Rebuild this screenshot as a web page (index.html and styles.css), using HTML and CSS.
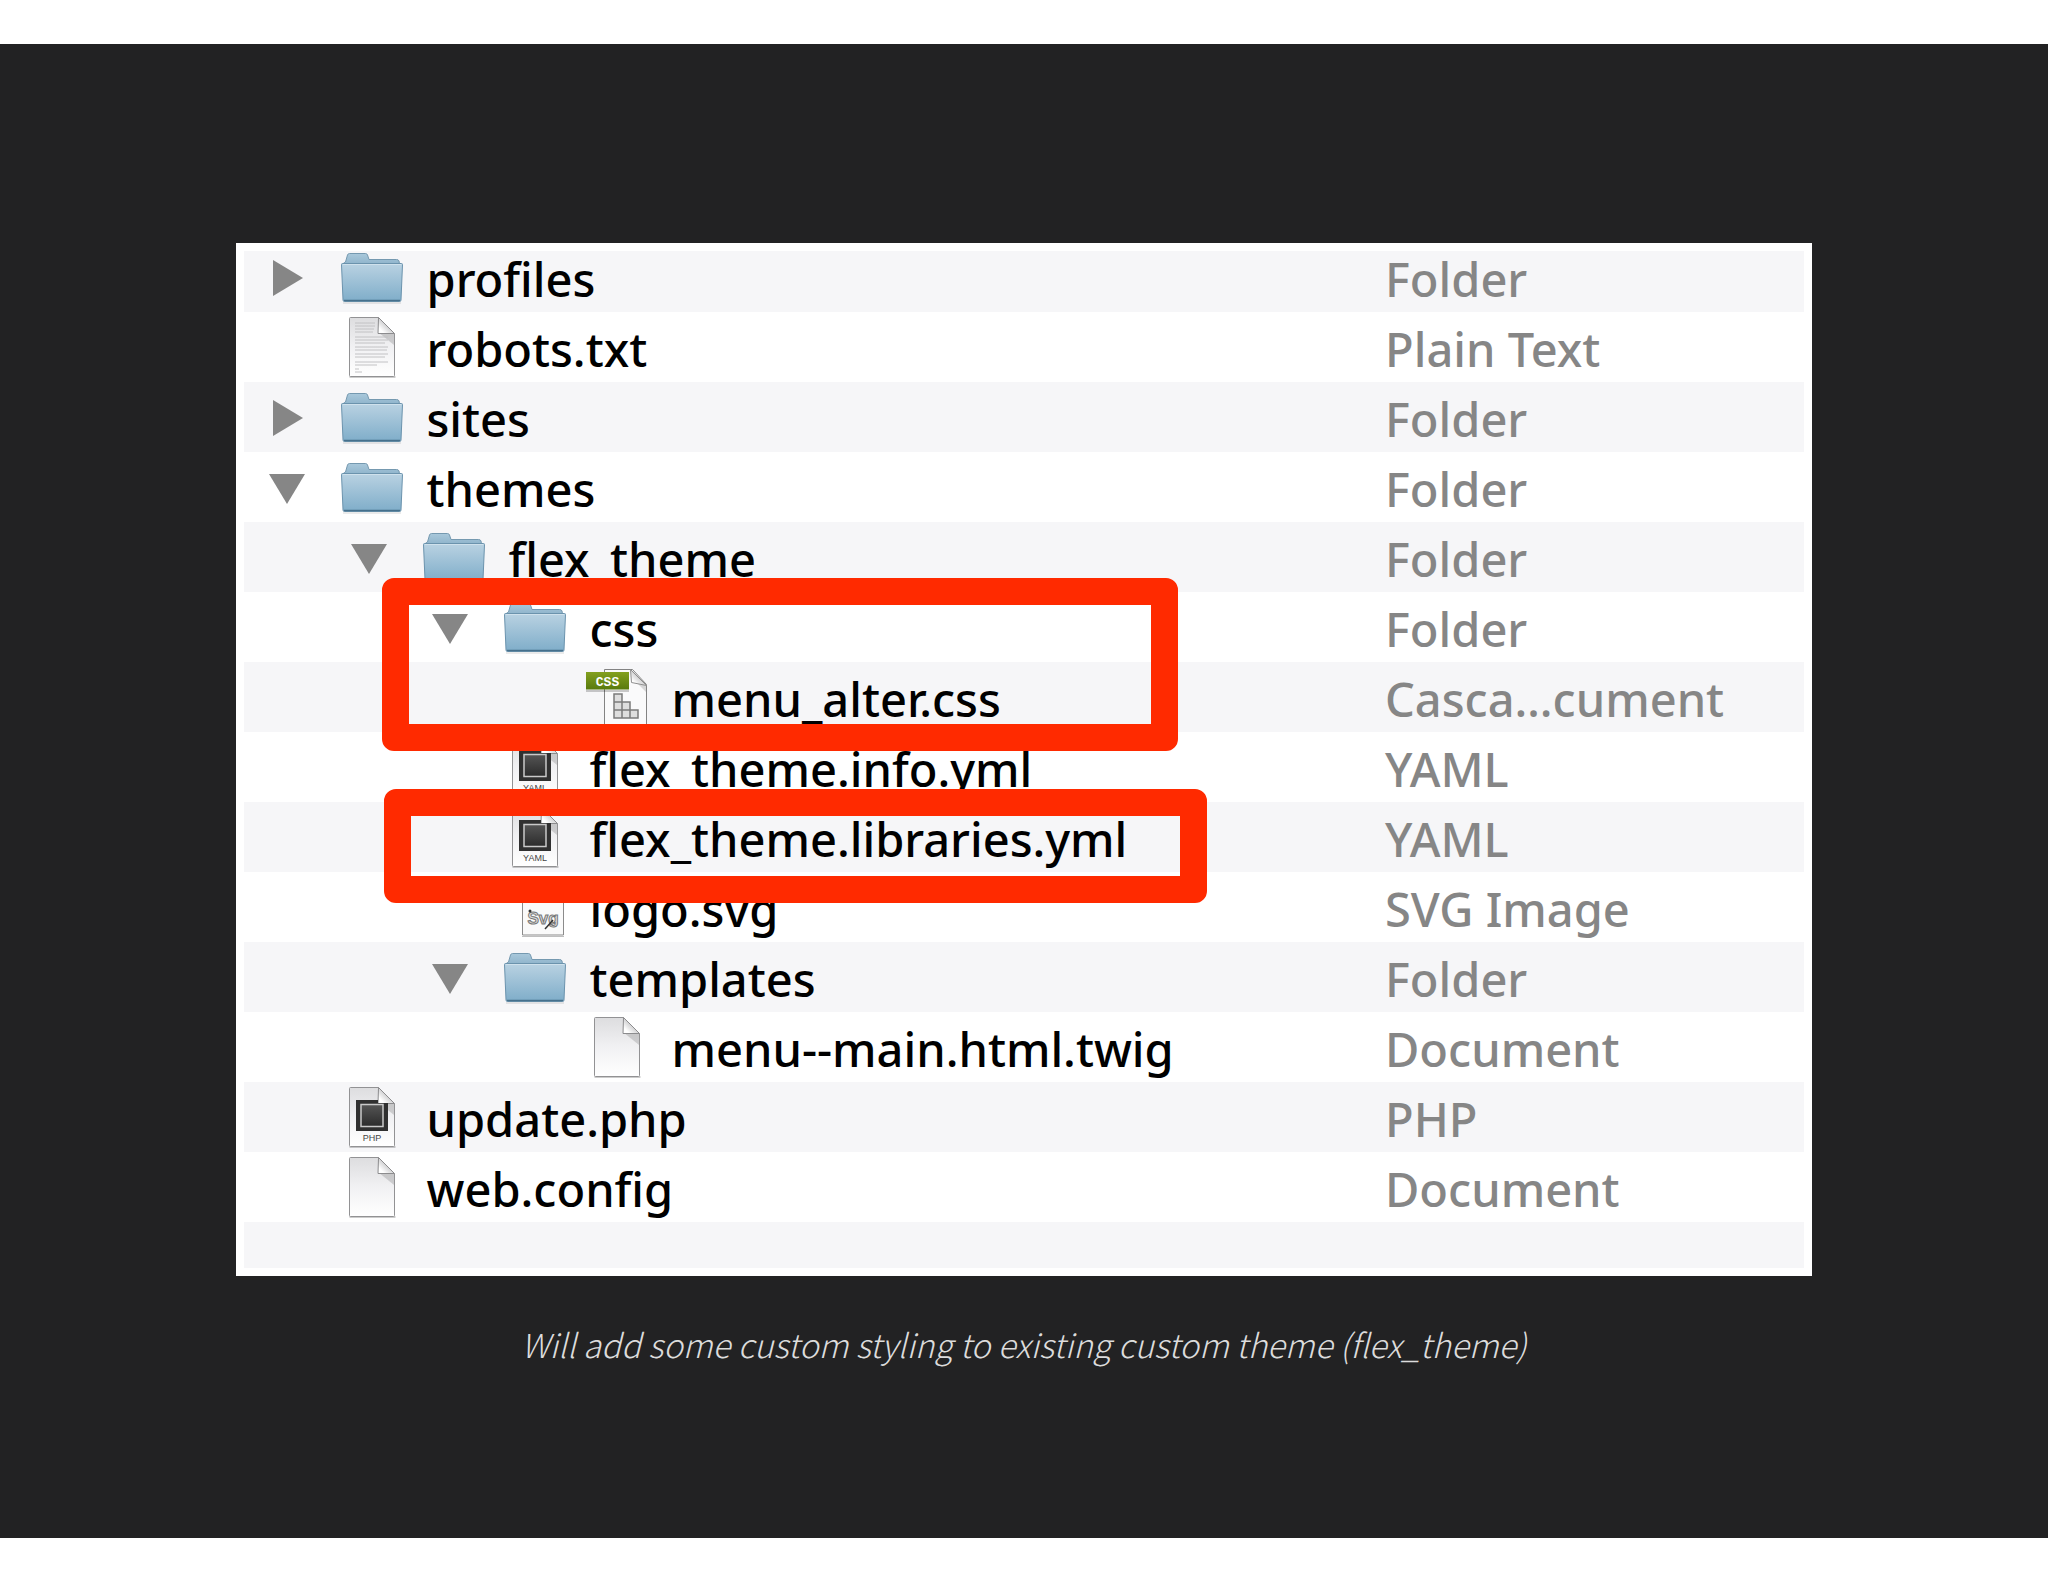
FILE: index.html
```html
<!DOCTYPE html>
<html lang="en">
<head>
    <meta charset="UTF-8">
    <meta name="viewport" content="width=device-width, initial-scale=1.0">
    <title>flex_theme</title>
    <link rel="stylesheet" href="styles.css">
</head>
<body>
    <!-- shared icons -->
    <svg class="sprite" aria-hidden="true">
        <defs>
            <linearGradient id="folderFront" x1="0" y1="0" x2="0" y2="1">
                <stop offset="0" stop-color="#b9d2e2"/>
                <stop offset="1" stop-color="#7fadc9"/>
            </linearGradient>
            <linearGradient id="folderBack" x1="0" y1="0" x2="0" y2="1">
                <stop offset="0" stop-color="#a9c8db"/>
                <stop offset="1" stop-color="#86adc6"/>
            </linearGradient>
            <linearGradient id="paper" x1="0" y1="0" x2="0" y2="1">
                <stop offset="0" stop-color="#dddddf"/>
                <stop offset="0.5" stop-color="#f1f1f3"/>
                <stop offset="1" stop-color="#ffffff"/>
            </linearGradient>
            <linearGradient id="curl" x1="0" y1="1" x2="1" y2="0">
                <stop offset="0.2" stop-color="#ffffff"/>
                <stop offset="0.6" stop-color="#c4c4c6"/>
            </linearGradient>
            <linearGradient id="screen" x1="0" y1="0" x2="0" y2="1">
                <stop offset="0" stop-color="#555555"/>
                <stop offset="1" stop-color="#2b2b2b"/>
            </linearGradient>
            <linearGradient id="tag" x1="0" y1="0" x2="0" y2="1">
                <stop offset="0" stop-color="#83a01f"/>
                <stop offset="1" stop-color="#587a0c"/>
            </linearGradient>
            <symbol id="right" viewBox="0 0 36 70">
                <path d="M4 18v36l30-18z" fill="#868686"/>
            </symbol>
            <symbol id="down" viewBox="0 0 36 70">
                <path d="M0 22h36l-18 30z" fill="#868686"/>
            </symbol>
            <symbol id="folder" viewBox="0 0 62 70">
                <path d="M1.500 22l3-2 2-7q.5-1.500 2-1.500h16q1.500 0 2 1.500l1.500 4.500h27.500q2 0 2.500 1.500l.5 3 2 1v3h-59z" fill="url(#folderBack)" stroke="#7599b0"/>
                <path d="M.5 22.500q0-1 1-1h59q1 0 1 1l-1.500 35.500q0 1.500-1.500 1.500h-55q-1.500 0-1.500-1.500z" fill="url(#folderFront)" stroke="#6b93ad"/>
                <path d="M2 22.500h58" stroke="#cfe1ec"/>
                <path d="M3 58.500h56" stroke="#46708c" stroke-width="1.500"/>
                <path d="M2 61h58" stroke="#000" stroke-opacity="0.16"/>
            </symbol>
            <symbol id="page" viewBox="0 0 62 70">
                <path d="M8.500 65h46" stroke="#000" stroke-opacity="0.2" stroke-width="2"/>
                <path d="M8.500 6.500q0-1 1-1h28l16 16.500v41.500q0 1-1 1h-43q-1 0-1-1z" fill="url(#paper)" stroke="#929294"/>
                <path d="M37 20l16 13v-11z" fill="#000" fill-opacity="0.14"/>
                <path d="M37.500 5.500l-.5 16h16.500z" fill="url(#curl)" stroke="#8c8c8e"/>
            </symbol>
            <symbol id="text" viewBox="0 0 62 70">
                <use href="#page"/>
                <path d="M14 11h20M14 14h20M14 17h19M14 20h18M14 25h33M14 28h33M14 31h30M14 35h33M14 38h32M14 42h33M14 45h30M14 50h33M14 53h22M14 57h4M14 60h7" stroke="#c2c2c4"/>
            </symbol>
            <symbol id="exec" viewBox="0 0 62 70">
                <use href="#page"/>
                <path d="M15 18h22v3h10v28h-32z" fill="#303030"/>
                <path d="M20 22.500h22v22h-22z" fill="url(#screen)" stroke="#c9c9c9" stroke-width="1.500"/>
            </symbol>
            <symbol id="css" viewBox="0 0 62 70">
                <path d="M18.500 7.500h28l14 15v42h-42z" fill="#fafafb" stroke="#838383"/>
                <path d="M44 14l16 16v-7z" fill="#000" fill-opacity="0.14"/>
                <path d="M44.500 7.500l1 13 15 3z" fill="url(#curl)" stroke="#8f8f8f"/>
                <path d="M0 28h43v2h-43z" fill="#000" fill-opacity="0.2"/>
                <path d="M0 10h43v17.500h-43z" fill="url(#tag)"/>
                <text x="21.500" y="23.500" class="tag-text">CSS</text>
                <path d="M28 32h8v8h8v8h8v8h-24zM28 40h8v16M28 48h16v8" fill="#dedede" stroke="#7b7b7b" stroke-width="1.500"/>
            </symbol>
            <symbol id="svg" viewBox="0 0 62 70">
                <path d="M18.500 7.500h28l13 13v42.500h-41z" fill="#fafafa" stroke="#8b8b8b"/>
                <path d="M18 64.500h42" stroke="#000" stroke-opacity="0.25"/>
                <text x="39" y="52" class="svg-text">Svg</text>
                <circle cx="26" cy="39" r="1.500" fill="#333"/>
                <path d="M41 57l8-9" stroke="#333" stroke-width="1.500"/>
            </symbol>
        </defs>
    </svg>

    <main class="slide">
        <figure class="shot">
            <div class="finder">
                <table class="files">
                    <tbody>
                        <tr>
                            <td><div class="name"><button class="toggle" aria-label="Expand profiles"><svg><use href="#right"/></svg></button><svg class="icon"><use href="#folder"/></svg><span>profiles</span></div></td>
                            <td class="kind">Folder</td>
                        </tr>
                        <tr>
                            <td><div class="name"><i class="toggle"></i><svg class="icon"><use href="#text"/></svg><span>robots.txt</span></div></td>
                            <td class="kind">Plain Text</td>
                        </tr>
                        <tr>
                            <td><div class="name"><button class="toggle" aria-label="Expand sites"><svg><use href="#right"/></svg></button><svg class="icon"><use href="#folder"/></svg><span>sites</span></div></td>
                            <td class="kind">Folder</td>
                        </tr>
                        <tr>
                            <td><div class="name"><button class="toggle" aria-label="Collapse themes"><svg><use href="#down"/></svg></button><svg class="icon"><use href="#folder"/></svg><span>themes</span></div></td>
                            <td class="kind">Folder</td>
                        </tr>
                        <tr>
                            <td><div class="name level1"><button class="toggle" aria-label="Collapse flex_theme"><svg><use href="#down"/></svg></button><svg class="icon"><use href="#folder"/></svg><span>flex_theme</span></div></td>
                            <td class="kind">Folder</td>
                        </tr>
                        <tr>
                            <td><div class="name level2"><button class="toggle" aria-label="Collapse css"><svg><use href="#down"/></svg></button><svg class="icon"><use href="#folder"/></svg><span>css</span></div></td>
                            <td class="kind">Folder</td>
                        </tr>
                        <tr>
                            <td><div class="name level3"><i class="toggle"></i><svg class="icon"><use href="#css"/></svg><span>menu_alter.css</span></div></td>
                            <td class="kind">Casca…cument</td>
                        </tr>
                        <tr>
                            <td><div class="name level2"><i class="toggle"></i><svg class="icon" viewBox="0 0 62 70"><use href="#exec"/><text x="31" y="59" class="icon-text">YAML</text></svg><span>flex_theme.info.yml</span></div></td>
                            <td class="kind">YAML</td>
                        </tr>
                        <tr>
                            <td><div class="name level2"><i class="toggle"></i><svg class="icon" viewBox="0 0 62 70"><use href="#exec"/><text x="31" y="59" class="icon-text">YAML</text></svg><span>flex_theme.libraries.yml</span></div></td>
                            <td class="kind">YAML</td>
                        </tr>
                        <tr>
                            <td><div class="name level2"><i class="toggle"></i><svg class="icon"><use href="#svg"/></svg><span>logo.svg</span></div></td>
                            <td class="kind">SVG Image</td>
                        </tr>
                        <tr>
                            <td><div class="name level2"><button class="toggle" aria-label="Collapse templates"><svg><use href="#down"/></svg></button><svg class="icon"><use href="#folder"/></svg><span>templates</span></div></td>
                            <td class="kind">Folder</td>
                        </tr>
                        <tr>
                            <td><div class="name level3"><i class="toggle"></i><svg class="icon"><use href="#page"/></svg><span>menu--main.html.twig</span></div></td>
                            <td class="kind">Document</td>
                        </tr>
                        <tr>
                            <td><div class="name"><i class="toggle"></i><svg class="icon" viewBox="0 0 62 70"><use href="#exec"/><text x="31" y="59" class="icon-text">PHP</text></svg><span>update.php</span></div></td>
                            <td class="kind">PHP</td>
                        </tr>
                        <tr>
                            <td><div class="name"><i class="toggle"></i><svg class="icon"><use href="#page"/></svg><span>web.config</span></div></td>
                            <td class="kind">Document</td>
                        </tr>
                        <tr class="empty">
                            <td colspan="2"></td>
                        </tr>
                    </tbody>
                </table>
                <div class="mark mark-css"></div>
                <div class="mark mark-libraries"></div>
            </div>
            <figcaption>Will add some custom styling to existing custom theme (flex_theme)</figcaption>
        </figure>
    </main>
</body>
</html>
```
FILE: styles.css
```css
*{
    margin: 0;
    padding: 0;
    box-sizing: border-box;
}
body{
    background-color: #fff;
    padding: 44px 0;
}
.sprite{
    position: absolute;
    width: 0;
    height: 0;
}
.slide{
    min-height: calc(100vh - 88px);
    padding-top: 199px;
    background-color: #222223;
}
.shot{
    width: 77%;
    margin: 0 auto;
}
.finder{
    position: relative;
    padding: 8px;
    background-color: #fff;
    overflow: hidden;
}
.files{
    width: 100%;
    table-layout: fixed;
    border-collapse: collapse;
    font-family: "Noto Sans", sans-serif;
    font-size: 47px;
    font-weight: 500;
    line-height: 66px;
    color: #000;
}
.files tr{
    height: 70px;
}
.files tr:nth-child(odd){
    background-color: #f6f6f8;
}
/* the list is scrolled a little, so the first and last rows are cut */
.files tr:first-child{
    height: 61px;
}
.files tr:first-child .name{
    height: 61px;
    align-items: flex-end;
}
.files tr:first-child .kind{
    padding-top: 0;
    line-height: 56px;
    vertical-align: top;
}
.files tr.empty{
    height: 46px;
}
.name{
    display: flex;
    align-items: center;
    height: 70px;
    padding-left: 25px;
    white-space: nowrap;
}
.name span{
    padding-top: 4px;
}
.level1{
    padding-left: 107px;
}
.level2{
    padding-left: 188px;
}
.level3{
    padding-left: 270px;
}
.toggle{
    flex: none;
    width: 36px;
    border: none;
    background: none;
}
.toggle svg{
    display: block;
    width: 36px;
    height: 70px;
}
.icon{
    flex: none;
    width: 62px;
    height: 70px;
    margin: 0 24px 0 36px;
}
.kind{
    width: 27%;
    padding: 4px 0 0 2px;
    color: #868686;
    white-space: nowrap;
}
.icon-text{
    font: 9px "Liberation Sans", sans-serif;
    fill: #444;
    text-anchor: middle;
}
.tag-text{
    font: bold 13px "Liberation Mono", monospace;
    fill: #fff;
    text-anchor: middle;
}
.svg-text{
    font: bold 17px "Liberation Sans", sans-serif;
    fill: #ddd;
    stroke: #777;
    text-anchor: middle;
}
/* red highlight boxes */
.mark{
    position: absolute;
    border: 27px solid #ff2a00;
    border-radius: 12px;
}
.mark-css{
    top: 335px;
    left: 146px;
    width: 796px;
    height: 173px;
}
.mark-libraries{
    top: 546px;
    left: 148px;
    width: 823px;
    height: 114px;
}
figcaption{
    margin-top: 44px;
    font-family: "Noto Sans CJK SC", sans-serif;
    font-size: 33px;
    font-weight: 300;
    font-style: italic;
    line-height: 48px;
    text-align: center;
    color: #dcdcdc;
}
```
